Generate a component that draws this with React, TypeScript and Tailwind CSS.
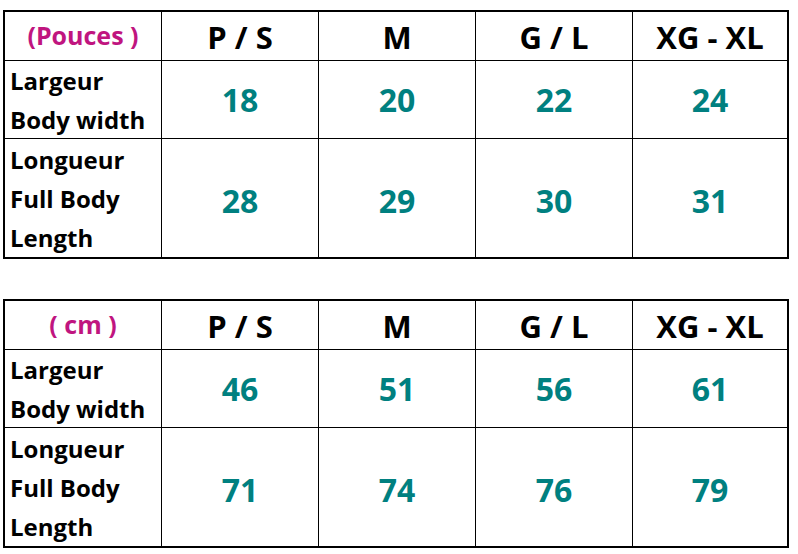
import React from "react";

type TableData = {
  unit: string;
  width: string[];
  length: string[];
};

const sizes = ["P / S", "M", "G / L", "XG - XL"];

const tables: TableData[] = [
  { unit: "(Pouces )", width: ["18", "20", "22", "24"], length: ["28", "29", "30", "31"] },
  { unit: "( cm )", width: ["46", "51", "56", "61"], length: ["71", "74", "76", "79"] },
];

function SizeTable({ data }: { data: TableData }) {
  return (
    <div className="w-[786px] border-2 border-black grid grid-cols-[157px_157px_157px_157px_154px] grid-rows-[49px_78px_118px] font-['Open_Sans','Liberation_Sans',sans-serif] font-bold">
      <div className="border-r border-b border-black flex items-center justify-center text-[25px] text-[#c0157f]">
        {data.unit}
      </div>
      {sizes.map((s, i) => (
        <div
          key={s}
          className={`border-b border-black flex items-center justify-center pt-[2px] text-[31px] text-black ${i < 3 ? "border-r" : ""}`}
        >
          {s}
        </div>
      ))}
      <div className="border-r border-b border-black pl-[5px] text-[24px] leading-[39px] text-black flex flex-col justify-center">
        <span>Largeur</span>
        <span>Body width</span>
      </div>
      {data.width.map((v, i) => (
        <div
          key={"w" + i}
          className={`border-b border-black flex items-center justify-center text-[32px] text-[#008080] ${i < 3 ? "border-r" : ""}`}
        >
          {v}
        </div>
      ))}
      <div className="border-r border-black pl-[5px] text-[24px] leading-[39px] text-black flex flex-col justify-center">
        <span>Longueur</span>
        <span>Full Body</span>
        <span>Length</span>
      </div>
      {data.length.map((v, i) => (
        <div
          key={"l" + i}
          className={`border-black flex items-center justify-center pt-[6px] text-[32px] text-[#008080] ${i < 3 ? "border-r" : ""}`}
        >
          {v}
        </div>
      ))}
    </div>
  );
}

export default function App() {
  return (
    <div className="w-[798px] h-[554px] bg-white pl-[3px] pt-[10px] flex flex-col gap-[40px]">
      {tables.map((t, i) => (
        <SizeTable key={i} data={t} />
      ))}
    </div>
  );
}
